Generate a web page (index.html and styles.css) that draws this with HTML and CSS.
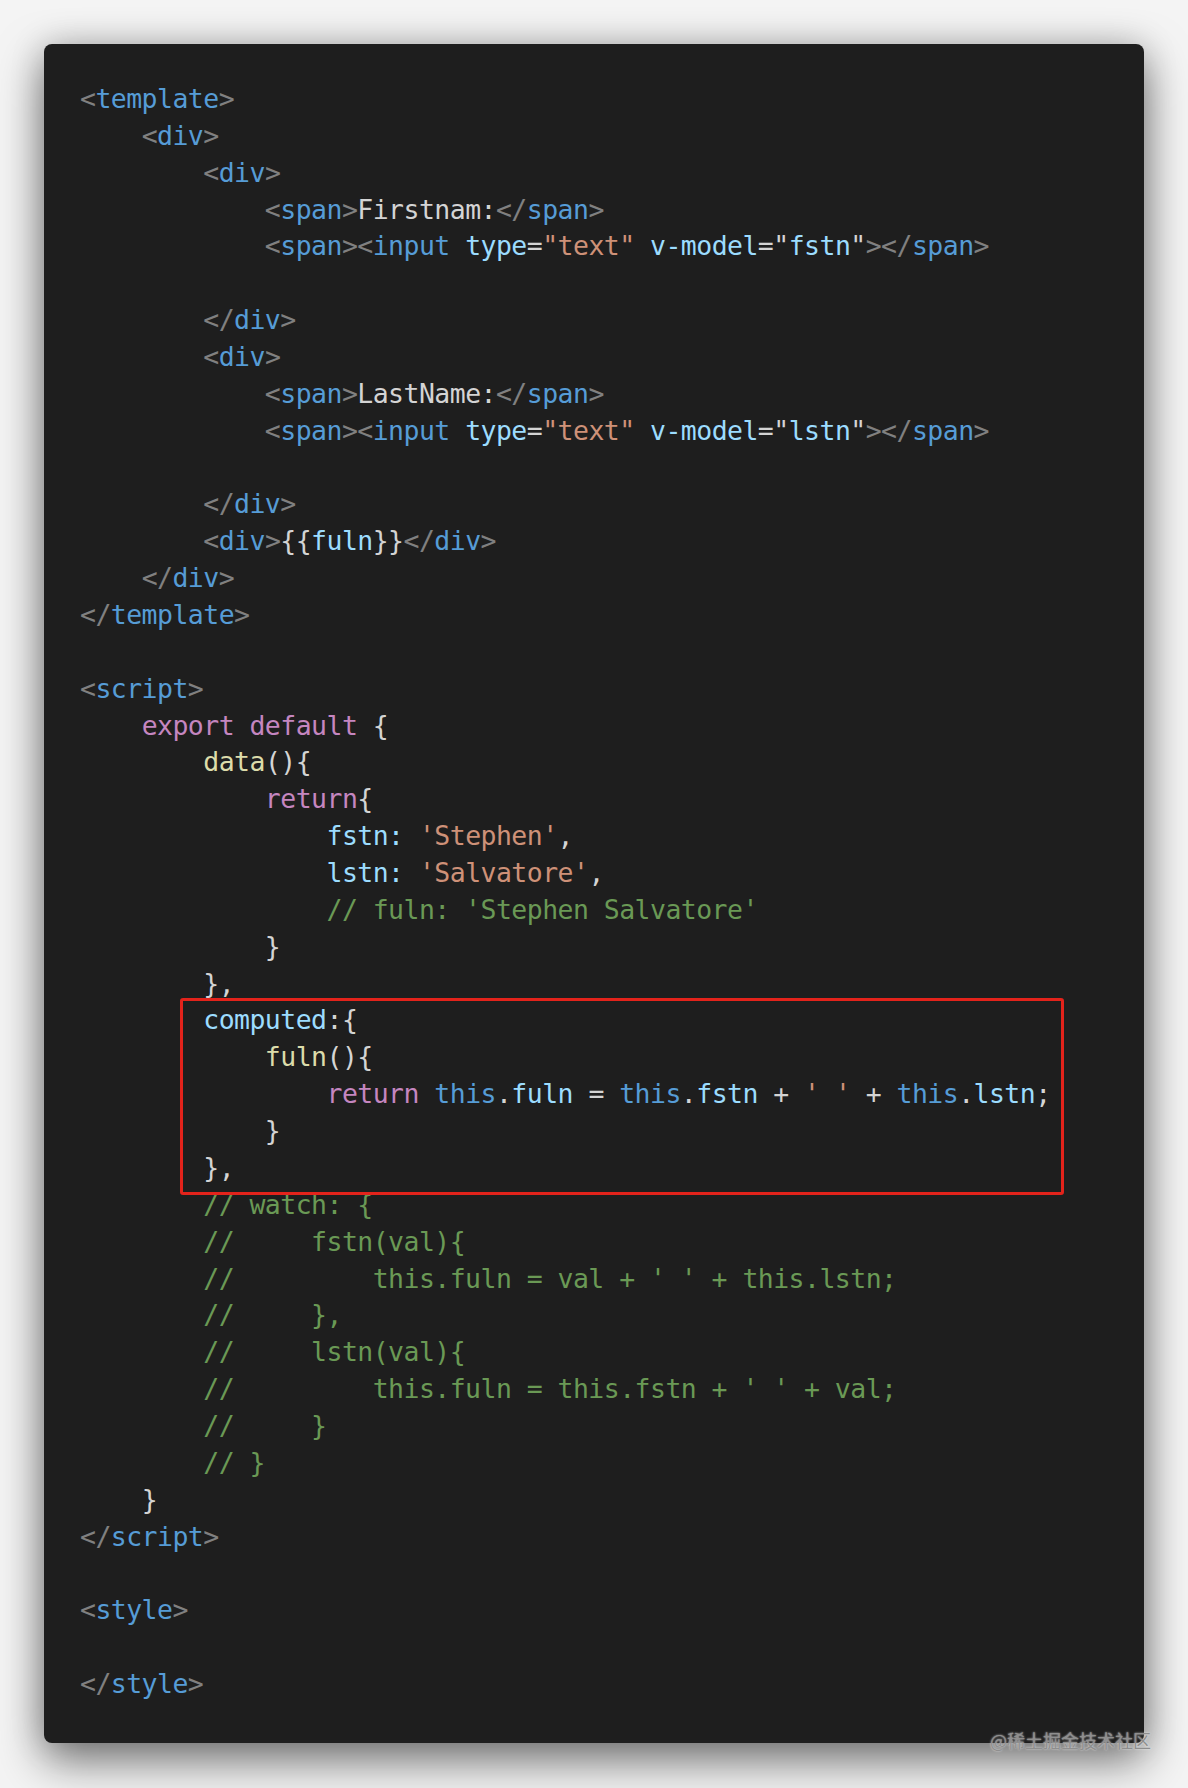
FILE: index.html
```html
<!DOCTYPE html>
<html lang="zh">
<head>
<meta charset="utf-8">
<title>Vue computed</title>
<link rel="stylesheet" href="styles.css">
</head>
<body>
<div class="page">
  <div class="card">
    <pre class="code"><div class="ln"><span class="p">&lt;</span><span class="t">template</span><span class="p">&gt;</span></div><div class="ln">    <span class="p">&lt;</span><span class="t">div</span><span class="p">&gt;</span></div><div class="ln">        <span class="p">&lt;</span><span class="t">div</span><span class="p">&gt;</span></div><div class="ln">            <span class="p">&lt;</span><span class="t">span</span><span class="p">&gt;</span><span class="w">Firstnam:</span><span class="p">&lt;/</span><span class="t">span</span><span class="p">&gt;</span></div><div class="ln">            <span class="p">&lt;</span><span class="t">span</span><span class="p">&gt;&lt;</span><span class="t">input</span> <span class="a">type</span><span class="w">=</span><span class="s">"text"</span> <span class="a">v-model</span><span class="w">="</span><span class="a">fstn</span><span class="w">"</span><span class="p">&gt;&lt;/</span><span class="t">span</span><span class="p">&gt;</span></div><div class="ln"> </div><div class="ln">        <span class="p">&lt;/</span><span class="t">div</span><span class="p">&gt;</span></div><div class="ln">        <span class="p">&lt;</span><span class="t">div</span><span class="p">&gt;</span></div><div class="ln">            <span class="p">&lt;</span><span class="t">span</span><span class="p">&gt;</span><span class="w">LastName:</span><span class="p">&lt;/</span><span class="t">span</span><span class="p">&gt;</span></div><div class="ln">            <span class="p">&lt;</span><span class="t">span</span><span class="p">&gt;&lt;</span><span class="t">input</span> <span class="a">type</span><span class="w">=</span><span class="s">"text"</span> <span class="a">v-model</span><span class="w">="</span><span class="a">lstn</span><span class="w">"</span><span class="p">&gt;&lt;/</span><span class="t">span</span><span class="p">&gt;</span></div><div class="ln"> </div><div class="ln">        <span class="p">&lt;/</span><span class="t">div</span><span class="p">&gt;</span></div><div class="ln">        <span class="p">&lt;</span><span class="t">div</span><span class="p">&gt;</span><span class="w">{{</span><span class="a">fuln</span><span class="w">}}</span><span class="p">&lt;/</span><span class="t">div</span><span class="p">&gt;</span></div><div class="ln">    <span class="p">&lt;/</span><span class="t">div</span><span class="p">&gt;</span></div><div class="ln"><span class="p">&lt;/</span><span class="t">template</span><span class="p">&gt;</span></div><div class="ln"> </div><div class="ln"><span class="p">&lt;</span><span class="t">script</span><span class="p">&gt;</span></div><div class="ln">    <span class="k">export</span> <span class="k">default</span> <span class="w">{</span></div><div class="ln">        <span class="f">data</span><span class="w">(){</span></div><div class="ln">            <span class="k">return</span><span class="w">{</span></div><div class="ln">                <span class="a">fstn:</span> <span class="s">'Stephen'</span><span class="w">,</span></div><div class="ln">                <span class="a">lstn:</span> <span class="s">'Salvatore'</span><span class="w">,</span></div><div class="ln">                <span class="c">// fuln: 'Stephen Salvatore'</span></div><div class="ln">            <span class="w">}</span></div><div class="ln">        <span class="w">},</span></div><div class="ln">        <span class="a">computed</span><span class="w">:{</span></div><div class="ln">            <span class="f">fuln</span><span class="w">(){</span></div><div class="ln">                <span class="k">return</span> <span class="t">this</span><span class="w">.</span><span class="a">fuln</span> <span class="w">=</span> <span class="t">this</span><span class="w">.</span><span class="a">fstn</span> <span class="w">+</span> <span class="s">' '</span> <span class="w">+</span> <span class="t">this</span><span class="w">.</span><span class="a">lstn</span><span class="w">;</span></div><div class="ln">            <span class="w">}</span></div><div class="ln">        <span class="w">},</span></div><div class="ln">        <span class="c">// watch: {</span></div><div class="ln">        <span class="c">//     fstn(val){</span></div><div class="ln">        <span class="c">//         this.fuln = val + ' ' + this.lstn;</span></div><div class="ln">        <span class="c">//     },</span></div><div class="ln">        <span class="c">//     lstn(val){</span></div><div class="ln">        <span class="c">//         this.fuln = this.fstn + ' ' + val;</span></div><div class="ln">        <span class="c">//     }</span></div><div class="ln">        <span class="c">// }</span></div><div class="ln">    <span class="w">}</span></div><div class="ln"><span class="p">&lt;/</span><span class="t">script</span><span class="p">&gt;</span></div><div class="ln"> </div><div class="ln"><span class="p">&lt;</span><span class="t">style</span><span class="p">&gt;</span></div><div class="ln"> </div><div class="ln"><span class="p">&lt;/</span><span class="t">style</span><span class="p">&gt;</span></div></pre>
    <div class="highlight"></div>
  </div>
  <div class="watermark">@稀土掘金技术社区</div>
</div>
</body>
</html>
```

FILE: styles.css
```css
html, body {
  margin: 0;
  padding: 0;
}
body {
  background: #f4f4f4;
}
.page {
  position: relative;
  padding: 44px 44px 45px 44px;
}
.card {
  position: relative;
  background: #1e1e1e;
  border-radius: 8px;
  height: 1699px;
  box-sizing: border-box;
  padding: 37px 20px 0 36px;
  box-shadow: 0 18px 46px rgba(0, 0, 0, 0.5), 0 0 34px rgba(0, 0, 0, 0.18);
}
.code {
  margin: 0;
  font-family: "DejaVu Sans Mono", "Liberation Mono", monospace;
  font-size: 26.5px;
  letter-spacing: -0.55px;
  line-height: 36.86px;
  color: #d4d4d4;
  white-space: pre;
}
.ln {
  height: 36.86px;
}
.p { color: #808080; }
.t { color: #569cd6; }
.a { color: #9cdcfe; }
.s { color: #ce9178; }
.w { color: #d4d4d4; }
.k { color: #c586c0; }
.f { color: #dcdcaa; }
.c { color: #6a9955; }

.highlight {
  position: absolute;
  left: 136px;
  top: 954px;
  width: 884px;
  height: 197px;
  box-sizing: border-box;
  border: 3px solid #e3231b;
  border-radius: 3px;
}
.watermark {
  position: absolute;
  left: 990px;
  top: 1728px;
  font-family: "Noto Sans CJK SC", sans-serif;
  font-size: 18px;
  line-height: 24px;
  color: #8e8e8e;
  text-shadow: 0 0 2px rgba(255, 255, 255, 0.8);
  white-space: nowrap;
}
```
